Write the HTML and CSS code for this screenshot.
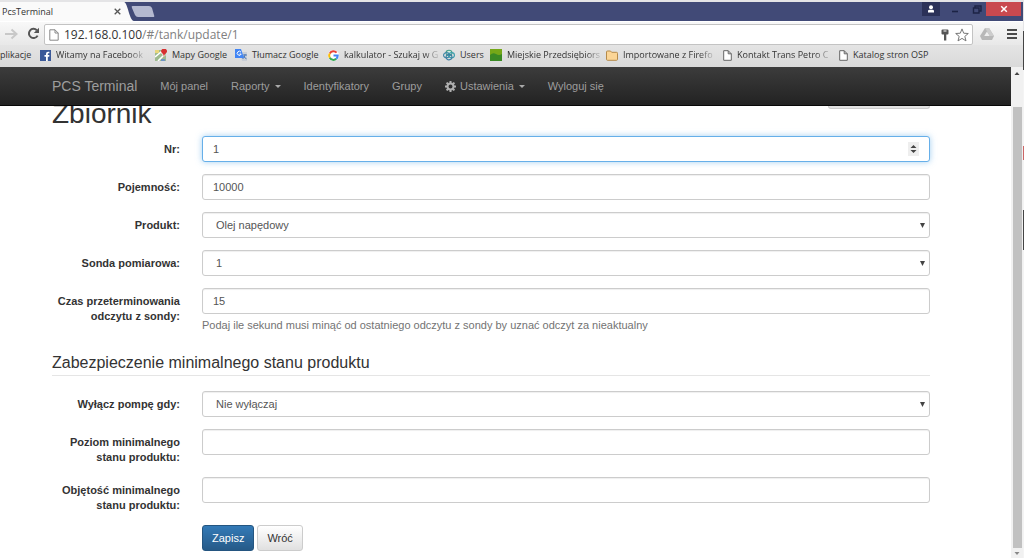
FILE: index.html
```html
<!DOCTYPE html>
<html lang="pl">
<head>
<meta charset="utf-8">
<title>PcsTerminal</title>
<link rel="stylesheet" href="styles.css">
</head>
<body>
<div class="window">
  <header class="titlebar">
    <div class="tab"><span class="tab-title">PcsTerminal</span>
      <button class="tab-close" aria-label="Zamknij kartę"><svg width="7" height="7" viewBox="0 0 7 7"><path d="M.7.7 6.3 6.3M6.3.7.7 6.3" stroke="#555" stroke-width="1.3"/></svg></button>
      <svg class="tab-edge" width="10" height="19" viewBox="0 0 10 19"><path d="M0 0C4 1 5 18 10 19H0Z" fill="#fafafa"/></svg>
    </div>
    <button class="new-tab" aria-label="Nowa karta"><svg width="26" height="13" viewBox="0 0 26 13"><path d="M2.5 1H19Q21 1 22 3L24 10Q25 12 23 12H8Q6 12 5 10L2 3Q1 1 2.5 1Z" fill="#b4b9d0"/></svg></button>
    <div class="controls">
      <button class="user" aria-label="Użytkownik"><svg width="8" height="8" viewBox="0 0 8 8"><circle cx="4" cy="2.2" r="2" fill="#fff"/><path d="M1 7.5V6Q1 4.7 2.5 4.7H5.5Q7 4.7 7 6V7.5Z" fill="#fff"/></svg></button>
      <button class="min" aria-label="Minimalizuj"><svg width="8" height="8" viewBox="0 0 8 8"><path d="M1 6.5H7" stroke="#1c2345" stroke-width="1.6"/></svg></button>
      <button class="max" aria-label="Przywróć"><svg width="10" height="9" viewBox="0 0 10 9"><path d="M3 2.5V1H9V6H7M1.5 3H7V8H1.5Z" fill="none" stroke="#1c2345" stroke-width="1.4"/></svg></button>
      <button class="close" aria-label="Zamknij"><svg width="8" height="8" viewBox="0 0 8 8"><path d="M1.2 1.2 6.8 6.8M6.8 1.2 1.2 6.8" stroke="#fff" stroke-width="1.5"/></svg></button>
    </div>
  </header>
  <div class="toolbar">
    <button class="tool forward" aria-label="Dalej"><svg width="13" height="12" viewBox="0 0 13 12"><path d="M0 6H11M6.5 1.5 11.5 6 6.5 10.5" fill="none" stroke="#c8c8c8" stroke-width="2"/></svg></button>
    <button class="tool reload" aria-label="Odśwież"><svg width="13" height="13" viewBox="0 0 13 13"><path d="M10.6 8.6A4.6 4.6 0 1 1 9.8 3.2" fill="none" stroke="#555" stroke-width="2"/><path d="M12 0.8V6H6.8Z" fill="#555"/></svg></button>
    <div class="address">
      <svg width="10" height="12" viewBox="0 0 10 12"><path d="M.8.8H6L9.2 4V11.2H.8ZM6 .8V4H9.2" fill="#fff" stroke="#888"/></svg>
      <div class="url" role="textbox" aria-label="Adres">192.168.0.100<span>/#/tank/update/1</span></div>
      <svg width="10" height="12" viewBox="0 0 8 12"><path d="M1.5.5H6.5Q7.5.5 7.5 1.5V4.5Q7.5 5.5 6.5 5.5H5.3V11.5H3V5.5H1.5Q.5 5.5.5 4.5V1.5Q.5.5 1.5.5Z" fill="#555"/><path d="M2.5 2H5.5" stroke="#fff"/></svg>
      <svg width="14" height="14" viewBox="0 0 14 14"><path d="M7 .9 8.7 5.2 13.3 5.5 9.8 8.4 11 12.9 7 10.4 3 12.9 4.2 8.4.7 5.5 5.3 5.2Z" fill="#fff" stroke="#777"/></svg>
    </div>
    <button class="tool drive" aria-label="Dysk"><svg width="14" height="12" viewBox="0 0 14 12"><path d="M5 0H9L14 8 12 12H2L0 8Z" fill="#b8b8b8"/><path d="M7 3.5 9.8 8H4.2Z" fill="#eee"/><path d="M5 0 9.8 8H14L9 0Z" fill="#cdcdcd"/></svg></button>
    <button class="tool menu" aria-label="Menu"><svg width="10" height="10" viewBox="0 0 10 10"><path d="M0 1H10M0 5H10M0 9H10" stroke="#4a4a4a" stroke-width="2"/></svg></button>
  </div>
  <nav class="bookmarks" aria-label="Zakładki">
    <a class="bm b0" href="#">plikacje</a>
    <a class="bm b1 fade" href="#"><svg width="11" height="11" viewBox="0 0 11 11"><path d="M0 0H11V11H0Z" fill="#3b5998"/><path d="M6 11V6.7H4.5V5H6V3.8Q6 1.7 8 1.7H9.4V3.3H8.5Q7.8 3.3 7.8 4V5H9.4L9.2 6.7H7.8V11Z" fill="#fff"/></svg><span>Witamy na Facebook</span></a>
    <a class="bm b2" href="#"><svg width="12" height="12" viewBox="0 0 12 12"><path d="M0 1H11V12H0Z" fill="#9eba8e"/><path d="M0 8 6 3 10 7M3 12 10 5" stroke="#fff" stroke-width="1.6" fill="none"/><path d="M0 1H4V4H0Z" fill="#e8d67a"/><path d="M6 10H10V12H6Z" fill="#6d93c4"/><path d="M9 8Q8.5 5 7.2 4.3A2.8 2.8 0 1 1 10.9 4.3Q9.5 5 9 8Z" fill="#d62f2f"/></svg><span>Mapy Google</span></a>
    <a class="bm b3" href="#"><svg width="12" height="12" viewBox="0 0 12 12"><path d="M5 3H12V12H7Z" fill="#c9ced6"/><path d="M8 6H12M10 5V6Q9.7 8.5 7.5 10M8.5 7Q9.5 9 11.5 9.8" stroke="#4c78b8" fill="none"/><path d="M0 0H6L9 9H0Z" fill="#4285f4"/><path d="M6 3.2A2 2 0 1 0 6.2 5H4.5" fill="none" stroke="#fff"/></svg><span>Tłumacz Google</span></a>
    <a class="bm b4 fade" href="#"><svg width="11" height="11" viewBox="0 0 11 11"><circle cx="5.5" cy="5.5" r="5.5" fill="#fff"/><g fill="none" stroke-width="2"><path d="M1.8 3.4A4.2 4.2 0 0 1 8.6 2.7" stroke="#ea4335"/><path d="M1.8 3.4A4.3 4.3 0 0 0 1.8 7.7" stroke="#fbbc05"/><path d="M1.8 7.7A4.2 4.2 0 0 0 8.3 8.8" stroke="#34a853"/><path d="M8.3 8.8Q9.7 7.5 9.7 5.5H5.5" stroke="#4285f4"/></g></svg><span>kalkulator - Szukaj w G</span></a>
    <a class="bm b5" href="#"><svg width="12" height="12" viewBox="0 0 13 12"><g fill="none" stroke-width="1.2"><ellipse cx="6.5" cy="3.8" rx="3.2" ry="3" fill="#d9eee4" stroke="#4a9e89"/><ellipse cx="3.8" cy="6.2" rx="3.2" ry="2.8" stroke="#3e87a6"/><ellipse cx="9.2" cy="6.2" rx="3.2" ry="2.8" stroke="#3b9dac"/><ellipse cx="6.5" cy="8.3" rx="3.2" ry="3" stroke="#3c7ea2"/></g></svg><span>Users</span></a>
    <a class="bm b6 fade" href="#"><svg width="12" height="12" viewBox="0 0 12 12"><path d="M0 0H12V12H0Z" fill="#3a8a24"/><path d="M0 0H12V5Q9 7 6 5T0 6Z" fill="#75a818"/></svg><span>Miejskie Przedsiębiors</span></a>
    <a class="bm b7 fade" href="#"><svg width="12" height="11" viewBox="0 0 12 11"><path d="M.5 2Q.5 1 1.5 1H4.5L5.7 2.3H10.5Q11.5 2.3 11.5 3.3V9.3Q11.5 10.3 10.5 10.3H1.5Q.5 10.3.5 9.3Z" fill="#fbd596" stroke="#b58a4a"/></svg><span>Importowane z Firefo</span></a>
    <a class="bm b8 fade" href="#"><svg width="9" height="11" viewBox="0 0 9 11"><path d="M.7.7H5.2L8.3 3.8V10.3H.7ZM5.2.7V3.8H8.3" fill="#fff" stroke="#666"/></svg><span>Kontakt Trans Petro C</span></a>
    <a class="bm b9" href="#"><svg width="9" height="11" viewBox="0 0 9 11"><path d="M.7.7H5.2L8.3 3.8V10.3H.7ZM5.2.7V3.8H8.3" fill="#fff" stroke="#666"/></svg><span>Katalog stron OSP</span></a>
  </nav>
  <div class="viewport">
    <div class="page">
      <nav class="navbar">
        <a class="brand" href="#">PCS Terminal</a>
        <a href="#">Mój panel</a>
        <a href="#">Raporty <i class="caret"></i></a>
        <a href="#">Identyfikatory</a>
        <a href="#">Grupy</a>
        <a href="#"><svg width="11" height="11" viewBox="0 0 11 11"><circle cx="5.5" cy="5.5" r="3" fill="none" stroke="#b0b0b0" stroke-width="2"/><path d="M5.5 0V2M5.5 9V11M0 5.5H2M9 5.5H11M1.6 1.6 3 3M8 8 9.4 9.4M9.4 1.6 8 3M3 8 1.6 9.4" stroke="#b0b0b0" stroke-width="2"/></svg> Ustawienia <i class="caret"></i></a>
        <a href="#">Wyloguj się</a>
      </nav>
      <main class="content">
        <div class="heading"><h1>Zbiornik</h1><button class="ghost" aria-label="Akcje"></button></div>
        <form class="form">
          <div class="row"><label for="nr">Nr:</label><div class="number"><input class="field active" id="nr" type="text" inputmode="numeric" value="1"><span class="spinner"><svg width="7" height="8" viewBox="0 0 7 8"><path d="M.5 3 3.5 0 6.5 3ZM.5 5 3.5 8 6.5 5Z" fill="#444"/></svg></span></div></div>
          <div class="row"><label for="poj">Pojemność:</label><input class="field" id="poj" value="10000"></div>
          <div class="row"><label for="prod">Produkt:</label><select class="field" id="prod"><option>Olej napędowy</option></select></div>
          <div class="row"><label for="sonda">Sonda pomiarowa:</label><select class="field" id="sonda"><option>1</option></select></div>
          <div class="row"><label for="czas">Czas przeterminowania odczytu z sondy:</label><div><input class="field" id="czas" value="15"><p class="help">Podaj ile sekund musi minąć od ostatniego odczytu z sondy by uznać odczyt za nieaktualny</p></div></div>
          <h2>Zabezpieczenie minimalnego stanu produktu</h2>
          <div class="row"><label for="pompa">Wyłącz pompę gdy:</label><select class="field" id="pompa"><option>Nie wyłączaj</option></select></div>
          <div class="row"><label for="poziom">Poziom minimalnego stanu produktu:</label><input class="field" id="poziom"></div>
          <div class="row"><label for="obj">Objętość minimalnego stanu produktu:</label><input class="field" id="obj"></div>
          <div class="actions"><button class="btn primary" type="button">Zapisz</button><button class="btn" type="button">Wróć</button></div>
        </form>
      </main>
    </div>
    <div class="scrollbar" aria-hidden="true">
      <svg width="12" height="12" viewBox="0 0 12 12"><path d="M3.5 8 6 5 8.5 8Z" fill="#444"/></svg>
      <div class="thumb"></div>
      <svg width="12" height="10" viewBox="0 0 12 10"><path d="M3.5 4 6 7 8.5 4Z" fill="#888"/></svg>
    </div>
  </div>
</div>
</body>
</html>
```
FILE: styles.css
```css
* { box-sizing: border-box; }
body { margin: 0; background: linear-gradient(#e4e4e6 31px, #444 31px 70px, #f4f4f4 70px 146px, #c66 146px 160px, #f4f4f4 160px 210px, #444 210px 250px, #f4f4f4 250px); overflow: hidden; font-family: "Liberation Sans", Arial, sans-serif; font-size: 11px; color: #333; }
button { border: 0; padding: 0; background: none; font: inherit; }
svg { display: block; flex: none; }
a { text-decoration: none; color: inherit; }

.window { height: 100vh; margin-right: 1px; padding-top: 2px; display: flex; flex-direction: column; }

.titlebar { flex: none; height: 19px; display: flex; align-items: flex-start; background: #414a77; font-family: "Open Sans", sans-serif; }
.tab { position: relative; height: 19px; width: 124px; padding-left: 2px; display: flex; align-items: center; background: #fafafa; font-size: 9px; }
.tab-title { flex: 1; }
.tab-edge { position: absolute; left: 100%; top: 0; }
.tab-close { margin-right: 3px; }
.new-tab { margin: 3px 0 0 6px; }
.controls { margin-left: auto; display: flex; height: 14px; }
.controls button { display: grid; place-items: center; height: 14px; }
.user { width: 18px; background: #2b3158; }
.min { width: 30px; }
.max { width: 14px; }
.close { width: 35px; margin: 0 2px; background: #c9494f; }

.toolbar { flex: none; height: 24px; display: flex; align-items: center; background: linear-gradient(#f8f8f8, #e8e8e8); border-top: 1px solid #fff; }
.forward { width: 23px; }
.reload { width: 21px; }
.address { flex: 1; height: 21px; margin-top: 2px; padding: 0 3px 0 4px; display: flex; align-items: center; gap: 5px; background: #fff; border: 1px solid #c3c3c3; border-radius: 2px; }
.url { flex: 1; font: 12px/18px "Open Sans", sans-serif; color: #333; }
.url span { color: #808080; }
.drive { width: 28px; }
.menu { width: 22px; }
.tool svg { margin: auto; }

.bookmarks { flex: none; height: 22px; padding-bottom: 2px; display: flex; align-items: center; background: linear-gradient(#e4e4e4, #d9d9d9); font: 9px/16px "Open Sans", sans-serif; color: #333; }
.bm { flex: none; display: flex; align-items: center; gap: 5px; white-space: nowrap; }
.fade span { -webkit-mask-image: linear-gradient(90deg, #000 calc(100% - 14px), #0003); mask-image: linear-gradient(90deg, #000 calc(100% - 14px), #0003); }
.b0 { width: 40px; }
.b1 { width: 115px; }
.b2 { width: 80px; }
.b3 { width: 93px; }
.b4 { width: 115px; }
.b5 { width: 47px; }
.b6 { width: 116px; }
.b7 { width: 117px; }
.b8 { width: 116px; }

.viewport { flex: 1; min-height: 0; display: flex; background: #fff; }
.page { flex: 1; min-width: 0; overflow: hidden; }
.navbar { height: 39px; padding-left: 52px; display: flex; align-items: center; gap: 23px; background: linear-gradient(#3c3c3c, #222); border-bottom: 1px solid #080808; color: #9d9d9d; font-size: 12px; white-space: nowrap; }
.navbar a { display: flex; align-items: center; gap: 4px; font-size: 11px; }
.navbar .brand { font-size: 14px; }
.caret { margin-left: 1px; border: 3px solid transparent; border-top-color: #aaa; border-bottom: 0; }

.content { padding: 0 81px 0 52px; }
.heading { display: flex; justify-content: space-between; height: 30px; overflow: hidden; }
h1 { margin: -9px 0 0; font-size: 28px; line-height: 34px; font-weight: 400; }
.ghost { width: 102px; height: 3px; background: #e2e2e2; border: 1px solid #ccc; border-top: 0; border-radius: 0 0 4px 4px; }
.form { display: grid; gap: 12px; }
.row { display: grid; grid-template-columns: 128px 1fr; gap: 22px; align-items: start; }
label { padding-top: 6px; text-align: right; font-weight: 700; line-height: 15px; }
.field { display: block; width: 100%; height: 26px; padding: 0 10px; font: inherit; color: #555; background: #fff; border: 1px solid #ccc; border-radius: 3px; box-shadow: inset 0 1px 1px #0001; outline: 0; }
.active { border-color: #66afe9; box-shadow: 0 0 6px #66afe999; }
.number { position: relative; }
.spinner { position: absolute; right: 11px; top: 6px; width: 11px; height: 14px; display: grid; place-items: center; background: #eee; }
select.field { appearance: none; padding-left: 13px; background: #fff url("data:image/svg+xml,%3Csvg xmlns='http://www.w3.org/2000/svg' width='5' height='5'%3E%3Cpath d='M0 0H5L2.5 5Z' fill='%23444'/%3E%3C/svg%3E") no-repeat right 4px center; }
.help { margin: 4px 0 0; line-height: 15px; color: #737373; }
h2 { margin: 8px 0 3px; padding-bottom: 2px; font-size: 16px; line-height: 20px; font-weight: 400; border-bottom: 1px solid #e5e5e5; }
.actions { margin-left: 150px; display: flex; gap: 3px; }
.btn { height: 26px; padding: 0 9px; border: 1px solid #ccc; border-radius: 3px; background: linear-gradient(#fff, #e0e0e0); color: #333; font-size: 11px; }
.btn.primary { color: #fff; background: linear-gradient(#337ab7, #265a88); border-color: #245580; }

.scrollbar { width: 12px; display: flex; flex-direction: column; background: #f1f1f1; }
.thumb { flex: 1; margin: 28px 1px 0 2px; background: #c1c1c1; }
```
